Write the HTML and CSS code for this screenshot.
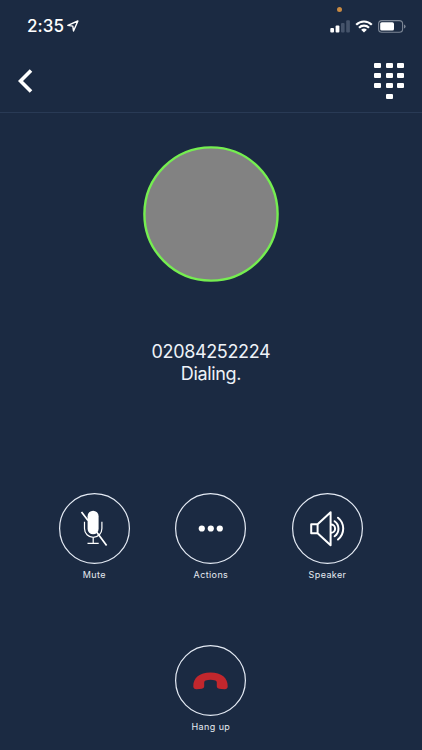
FILE: index.html
```html
<!DOCTYPE html>
<html lang="en">
<head>
    <meta charset="UTF-8">
    <meta name="viewport" content="width=device-width, initial-scale=1.0">
    <title>Call</title>
    <link rel="stylesheet" href="styles.css">
</head>
<body>
    <div class="status-bar">
        <div class="clock">2:35</div>
        <svg class="location" width="12" height="12" viewBox="0 0 12 12">
            <path d="M0.8 5.4 L10.9 1 L6.5 11 L5.8 6.1 Z"/>
        </svg>
        <span class="mic-dot"></span>
        <svg class="signal" width="20" height="13" viewBox="0 0 20 13">
            <rect x="0.3" y="8" width="3.7" height="4.4" rx="1"/>
            <rect x="5.6" y="5.6" width="3.8" height="6.8" rx="1"/>
            <rect class="off" x="11" y="3" width="3.6" height="9.4" rx="1"/>
            <rect class="off" x="16.2" y="0.2" width="3.7" height="12.2" rx="1"/>
        </svg>
        <svg class="wifi" width="18" height="13" viewBox="0 0 18 13">
            <path d="M1.2 4.7 A11.1 11.1 0 0 1 16.8 4.7 M4 7.7 A7.1 7.1 0 0 1 14 7.7"/>
            <path class="fill" d="M9 12.5 L6.1 9.8 A4.2 4.2 0 0 1 11.9 9.8 Z"/>
        </svg>
        <svg class="battery" width="28" height="13" viewBox="0 0 28 13">
            <rect class="case" x="0.6" y="0.6" width="24" height="11.6" rx="3.3"/>
            <rect x="2.2" y="2.2" width="13.8" height="8.4" rx="1.6"/>
            <path class="cap" d="M26 4.4 Q27.6 5 27.6 6.4 Q27.6 7.8 26 8.4 Z"/>
        </svg>
    </div>

    <header>
        <svg class="back" width="15" height="24" viewBox="0 0 15 24">
            <path d="M13 1.5 L2.5 12 L13 22.5"/>
        </svg>
        <div class="keypad">
            <i></i><i></i><i></i>
            <i></i><i></i><i></i>
            <i></i><i></i><i></i>
            <i class="zero"></i>
        </div>
    </header>

    <main>
        <svg class="avatar" viewBox="0 0 136 136">
            <circle cx="68" cy="68" r="66.6"/>
        </svg>
        <div class="caller">
            <div class="number">02084252224</div>
            <div class="state">Dialing.</div>
        </div>

        <div class="actions">
            <div class="action">
                <svg class="icon" viewBox="0 0 71 71">
                    <circle class="ring" cx="35.5" cy="35.5" r="34.9"/>
                    <rect class="solid" x="28.6" y="17.7" width="11" height="23.6" rx="5.5"/>
                    <path class="thin" d="M25.5 28.8 V35.5 A8.7 8.9 0 0 0 42.9 35.5 V28.8 M34.2 44.4 V50.3 M28.5 50.3 H39.7"/>
                    <path class="slash" d="M22.5 18.9 L29 27.6 M37.6 39.1 L47.6 52.5"/>
                </svg>
                <span>Mute</span>
            </div>
            <div class="action">
                <svg class="icon" viewBox="0 0 71 71">
                    <circle class="ring" cx="35.5" cy="35.5" r="34.9"/>
                    <circle class="solid" cx="26.8" cy="35.5" r="3.1"/>
                    <circle class="solid" cx="35.8" cy="35.5" r="3.1"/>
                    <circle class="solid" cx="44.8" cy="35.5" r="3.1"/>
                </svg>
                <span>Actions</span>
            </div>
            <div class="action">
                <svg class="icon" viewBox="0 0 71 71">
                    <circle class="ring" cx="35.5" cy="35.5" r="34.9"/>
                    <path class="line" d="M19.2 31.2 H25.6 V40.2 H19.2 Z M25.6 31.2 L38.6 19.2 V52.3 L25.6 40.2"/>
                    <path class="line" d="M39 31.6 A4.1 4.1 0 0 1 39 39.8 M42.6 28.2 A9.2 9.2 0 0 1 42.6 43.2 M46 24.7 A14 14 0 0 1 46 46.5"/>
                </svg>
                <span>Speaker</span>
            </div>
        </div>

        <div class="action hang-up">
            <svg class="icon" viewBox="0 0 71 71">
                <circle class="ring" cx="35.5" cy="35.5" r="34.9"/>
                <path class="phone" d="M18.3 41.5 C18.1 33 24.4 27.6 35.5 27.6 C46.6 27.6 52.9 33 52.7 41.5 Q52.4 44.4 49.4 44.2 L44.2 43.8 Q41.8 43.5 41.8 41.5 V37.5 Q41.8 36 40.4 35.4 Q35.5 34 30.6 35.4 Q29.2 36 29.2 37.5 V41.5 Q29.2 43.5 26.8 43.8 L21.6 44.2 Q18.6 44.4 18.3 41.5 Z"/>
            </svg>
            <span>Hang up</span>
        </div>
    </main>
</body>
</html>
```

FILE: styles.css
```css
* { box-sizing: border-box; }
body {
    margin: 0;
    height: 750px;
    overflow: hidden;
    background: #1b2a42;
    color: #fff;
    font-family: Inter, "Liberation Sans", sans-serif;
}
svg { display: block; fill: none; stroke: none; }

/* status bar */
.status-bar {
    position: relative;
    display: flex;
    align-items: center;
    height: 52px;
    padding: 0 16px 0 27px;
}
.clock { width: 37px; font-size: 17px; font-weight: 500; line-height: 20px; letter-spacing: 0.1px; white-space: nowrap; }
.location { margin-left: 3px; stroke: #fff; stroke-width: 1.4; stroke-linejoin: round; }
.mic-dot {
    position: absolute;
    top: 7px;
    left: 337px;
    width: 5px;
    height: 5px;
    border-radius: 50%;
    background: #c98a42;
}
.signal { margin-left: auto; fill: #fff; }
.signal .off { fill: #45536a; }
.wifi { margin-left: 5px; stroke: #fff; stroke-width: 2.2; }
.wifi .fill { fill: #fff; stroke: none; }
.battery { margin-left: 5px; fill: #fff; }
.battery .case { fill: none; stroke: #7d8796; stroke-width: 1.1; }
.battery .cap { fill: #7d8796; }

/* header */
header {
    display: flex;
    justify-content: space-between;
    align-items: flex-start;
    height: 61px;
    padding: 11px 18px 0 18px;
    border-bottom: 1px solid #293a55;
}
.back { margin-top: 6px; stroke: #fff; stroke-width: 3.6; }
.keypad {
    display: grid;
    grid-template-columns: repeat(3, 7px);
    gap: 5.2px 4.4px;
}
.keypad i { height: 5px; border-radius: 1px; background: #fff; }
.keypad .zero { grid-column: 2; }

/* call screen */
main { display: flex; flex-direction: column; align-items: center; padding-right: 0.2px; }
.avatar {
    width: 136px;
    height: 136px;
    margin-top: 33px;
    fill: #828282;
    stroke: #75ee50;
    stroke-width: 2.4;
}
.caller {
    margin-top: 59px;
    font-size: 18px;
    line-height: 22px;
    letter-spacing: -0.35px;
    text-align: center;
    color: #eef2f8;
}
.actions {
    display: grid;
    grid-template-columns: repeat(3, 116.6px);
    margin-top: 108px;
}
.action { display: flex; flex-direction: column; align-items: center; }
.action span {
    margin-top: 5px;
    font-size: 9px;
    line-height: 12px;
    letter-spacing: 0.4px;
    color: #e6eaf1;
}
.icon { width: 71px; height: 71px; }
.ring { stroke: #e4eaf4; stroke-width: 1.2; }
.solid { fill: #fff; }
.thin { stroke: #fff; stroke-width: 1.2; }
.slash { stroke: #fff; stroke-width: 1.7; }
.line { stroke: #fff; stroke-width: 2; stroke-linejoin: round; stroke-linecap: round; }
.phone { fill: #c2272d; }
.hang-up { margin-top: 63.7px; }
```
